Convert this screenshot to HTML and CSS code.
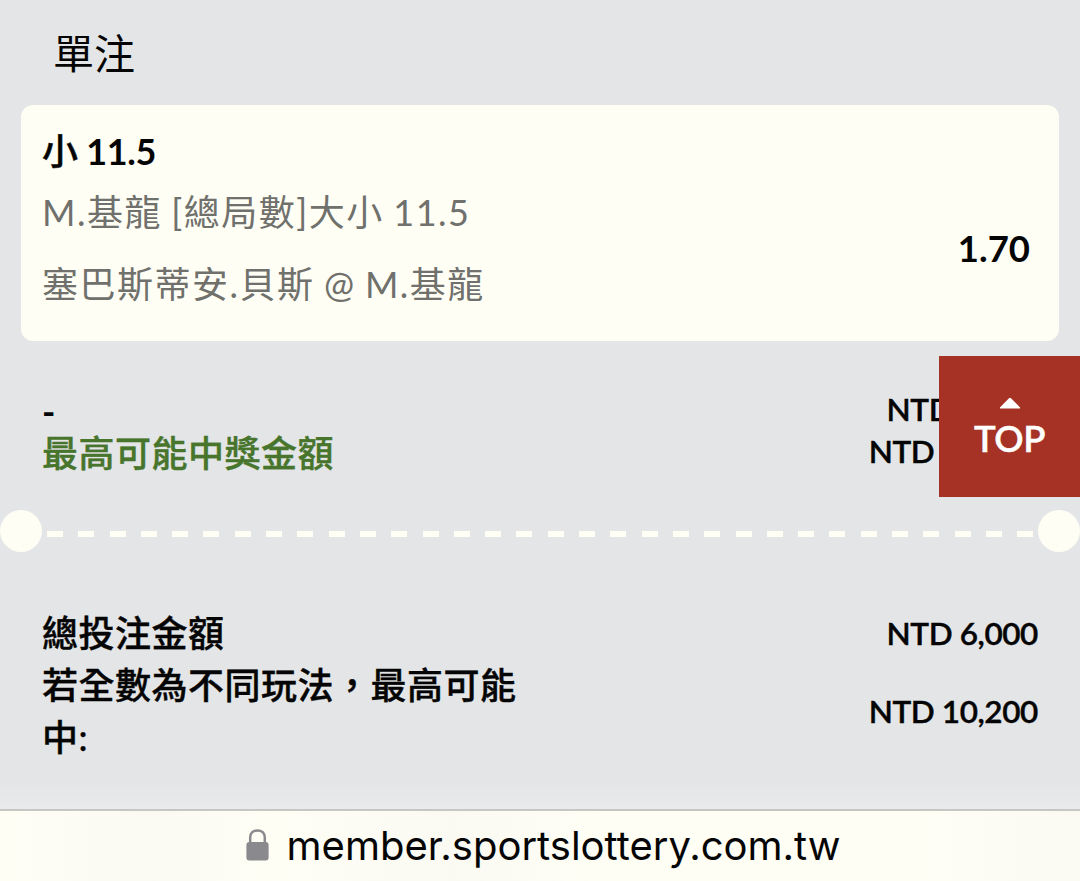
FILE: index.html
```
<!DOCTYPE html>
<html lang="zh-Hant-TW">
<head>
  <meta charset="UTF-8">
  <meta name="viewport" content="width=device-width, initial-scale=1.0">
  <title>台灣運彩</title>
  <link rel="stylesheet" href="styles.css">
</head>
<body>
  <main class="slip">
    <h1 class="slip-title">單注</h1>

    <!-- Selection -->
    <section class="bet-card">
      <div class="bet-info">
        <h2 class="bet-pick"><span class="pick-side">小</span> 11.5</h2>
        <p class="bet-market">M.基龍 [總局數]大小 11.5</p>
        <p class="bet-match">塞巴斯蒂安.貝斯 @ M.基龍</p>
      </div>
      <span class="bet-odds">1.70</span>
    </section>

    <section class="stake">
      <div class="stake-labels">
        <p class="stake-dash">-</p>
        <p class="stake-win">最高可能中獎金額</p>
      </div>
      <div class="stake-values">
        <p>NTD 6,000</p>
        <p>NTD 10,200</p>
      </div>
    </section>

    <!-- Ticket tear line -->
    <div class="divider">
      <span class="notch"></span>
      <span class="dashes"></span>
      <span class="notch"></span>
    </div>

    <!-- Totals -->
    <section class="totals">
      <div class="total-row">
        <p class="total-label">總投注金額</p>
        <p class="total-value">NTD 6,000</p>
      </div>
      <div class="total-row">
        <p class="total-label">若全數為不同玩法，最高可能中:</p>
        <p class="total-value">NTD 10,200</p>
      </div>
    </section>

    <a class="top-btn" href="#">
      <svg width="22" height="12" viewBox="0 0 22 12"><path d="M2 11.5 Q0 11.5 1.4 10 L10 1.2 Q11 0.2 12 1.2 L20.6 10 Q22 11.5 20 11.5 Z" fill="#fff"/></svg>
      <span>TOP</span>
    </a>
  </main>

  <footer class="url-bar">
    <svg class="lock" width="23" height="32" viewBox="0 0 23 32">
      <path d="M4.2 15 V8.5 C4.2 3.8 7.3 1.4 11.5 1.4 C15.7 1.4 18.8 3.8 18.8 8.5 V15" fill="none" stroke="#8a898d" stroke-width="2.5"/>
      <rect x="0.4" y="13" width="22.2" height="18.5" rx="3" fill="#8a898d"/>
    </svg>
    <span class="url">member.sportslottery.com.tw</span>
  </footer>
</body>
</html>
```
FILE: styles.css
```
* {
  margin: 0;
  padding: 0;
  box-sizing: border-box;
}

body {
  display: flex;
  flex-direction: column;
  height: 881px;
  overflow: hidden;
  font-family: Lato, "Noto Sans CJK TC", sans-serif;
  background: #e4e5e7;
  color: #050505;
}

.slip {
  position: relative;
  height: 809px;
  background: linear-gradient(to bottom, #e4e5e7 780px, #e9eaeb 809px);
}

.slip-title {
  height: 105px;
  padding: 24px 0 0 53px;
  font-size: 41px;
  font-weight: 400;
  line-height: 60px;
}

/* Selection card */
.bet-card {
  display: flex;
  justify-content: space-between;
  height: 236px;
  margin: 0 21px;
  padding: 19px 29px 0 21px;
  background: #fefef5;
  border-radius: 12px;
}

.bet-pick {
  font-size: 36px;
  font-weight: 700;
  line-height: 54px;
  letter-spacing: -0.3px;
}

.pick-side {
  font-weight: 500;
  -webkit-text-stroke: 0.5px;
}

.bet-market,
.bet-match {
  font-size: 36px;
  line-height: 72px;
  letter-spacing: 1.5px;
  word-spacing: -1.3px;
  color: #70706c;
}

.bet-market {
  margin-top: -2px;
}

.bet-odds {
  margin-top: 97px;
  font-size: 36.5px;
  font-weight: 700;
  line-height: 54px;
}

/* Stake */
.stake {
  display: flex;
  justify-content: space-between;
  height: 169px;
  padding: 47px 42px 0 42px;
}

.stake-dash,
.stake-win {
  font-size: 36px;
  font-weight: 500;
  line-height: 42px;
  letter-spacing: 0.5px;
}

.stake-dash {
  padding-top: 2px;
  font-weight: 700;
}

.stake-win {
  color: #47752c;
  -webkit-text-stroke: 0.4px;
}

.stake-values,
.total-value {
  font-size: 31.5px;
  font-weight: 600;
  line-height: 42px;
  letter-spacing: -0.4px;
  text-align: right;
  -webkit-text-stroke: 0.4px;
}

/* Tear line */
.divider {
  display: flex;
  align-items: center;
  height: 42px;
}

.notch {
  width: 42px;
  height: 42px;
  background: #fefef5;
  border-radius: 50%;
}

.dashes {
  width: 986px;
  height: 6px;
  margin: 5px 5px 0;
  background: repeating-linear-gradient(to right, #fefef5 0 16px, transparent 16px 31.3px);
}

/* Totals */
.totals {
  padding: 55px 42px 0 42px;
}

.total-row {
  display: flex;
  justify-content: space-between;
  align-items: center;
}

.total-label {
  width: 485px;
  font-size: 36px;
  font-weight: 500;
  line-height: 52px;
  letter-spacing: 0.5px;
  -webkit-text-stroke: 0.4px;
}

/* Back to top */
.top-btn {
  position: absolute;
  top: 356px;
  right: 0;
  display: flex;
  flex-direction: column;
  align-items: center;
  width: 141px;
  height: 141px;
  padding-top: 41px;
  background: #a63226;
  color: #fff;
  font-size: 36.5px;
  font-weight: 600;
  line-height: 44px;
  letter-spacing: -0.4px;
  text-decoration: none;
}

.top-btn span {
  margin-top: 7px;
  -webkit-text-stroke: 0.4px;
}

/* Browser address bar */
.url-bar {
  display: flex;
  justify-content: center;
  height: 72px;
  padding: 18px 0 0 6px;
  background: linear-gradient(to right, #fefef5, #fafaf3 14%, #fefef5 25%, #fafaf3 42%, #fefef5 55% 85%, #fafaf3);
  border-top: 2px solid #c6c7c4;
}

.url {
  margin-left: 18px;
  font-family: Inter, sans-serif;
  font-size: 40px;
  line-height: 34px;
}
```
